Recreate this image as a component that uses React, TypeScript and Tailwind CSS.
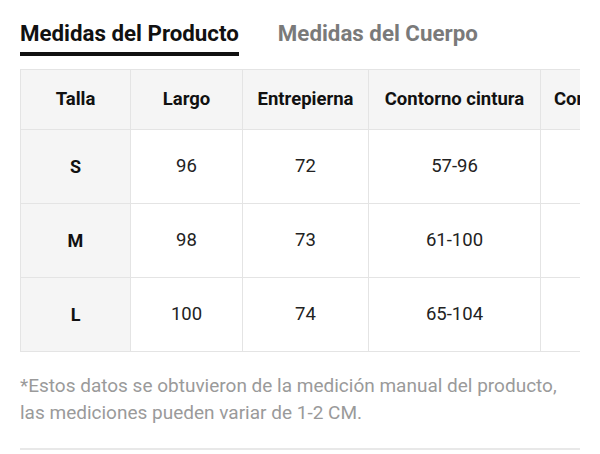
const headers = ["Talla", "Largo", "Entrepierna", "Contorno cintura", "Contorno cadera"];

const rows = [
  ["S", "96", "72", "57-96", ""],
  ["M", "98", "73", "61-100", ""],
  ["L", "100", "74", "65-104", ""],
];

const widths = ["w-[110px]", "w-[112px]", "w-[126px]", "w-[172px]", "w-[160px]"];

export default function App() {
  return (
    <div className="h-[454px] w-[600px] overflow-hidden bg-white px-5 font-['Roboto',sans-serif]">
      <div className="flex gap-[39px] pt-[18px]">
        <div className="flex flex-col">
          <span className="text-[22.3px] leading-[30px] font-bold text-[#111]">Medidas del Producto</span>
          <span className="mt-[4px] h-[4px] w-full bg-[#111]" />
        </div>
        <span className="text-[22.3px] leading-[30px] font-bold text-[#7a7a7a]">Medidas del Cuerpo</span>
      </div>

      <div className="mt-[13px] w-[560px] overflow-hidden">
        <table className="table-fixed border-collapse w-[680px]">
          <thead>
            <tr className="h-[60px] bg-[#f5f5f5]">
              {headers.map((h, i) => (
                <th
                  key={h}
                  className={
                    i < 4
                      ? `${widths[i]} border border-[#e4e4e4] px-2 text-center text-[18.5px] font-bold text-[#111] whitespace-nowrap`
                      : `${widths[i]} border border-[#e4e4e4] pl-[13px] text-left text-[18.5px] font-bold text-[#111] whitespace-nowrap`
                  }
                >
                  {h}
                </th>
              ))}
            </tr>
          </thead>
          <tbody>
            {rows.map((row) => (
              <tr key={row[0]} className="h-[74px]">
                {row.map((cell, i) => (
                  <td
                    key={i}
                    className={
                      i === 0
                        ? "border border-[#e4e4e4] bg-[#f5f5f5] text-center text-[18px] font-bold text-[#111]"
                        : "border border-[#e4e4e4] text-center text-[18.5px] text-[#222]"
                    }
                  >
                    {cell}
                  </td>
                ))}
              </tr>
            ))}
          </tbody>
        </table>
      </div>

      <p className="mt-[20px] text-[19px] leading-[27px] text-[#9a9a9a]">
        *Estos datos se obtuvieron de la medición manual del producto,
        <br />
        las mediciones pueden variar de 1-2 CM.
      </p>

      <div className="mt-[22px] h-[2px] w-[560px] bg-[#e8e8e8]" />
    </div>
  );
}
